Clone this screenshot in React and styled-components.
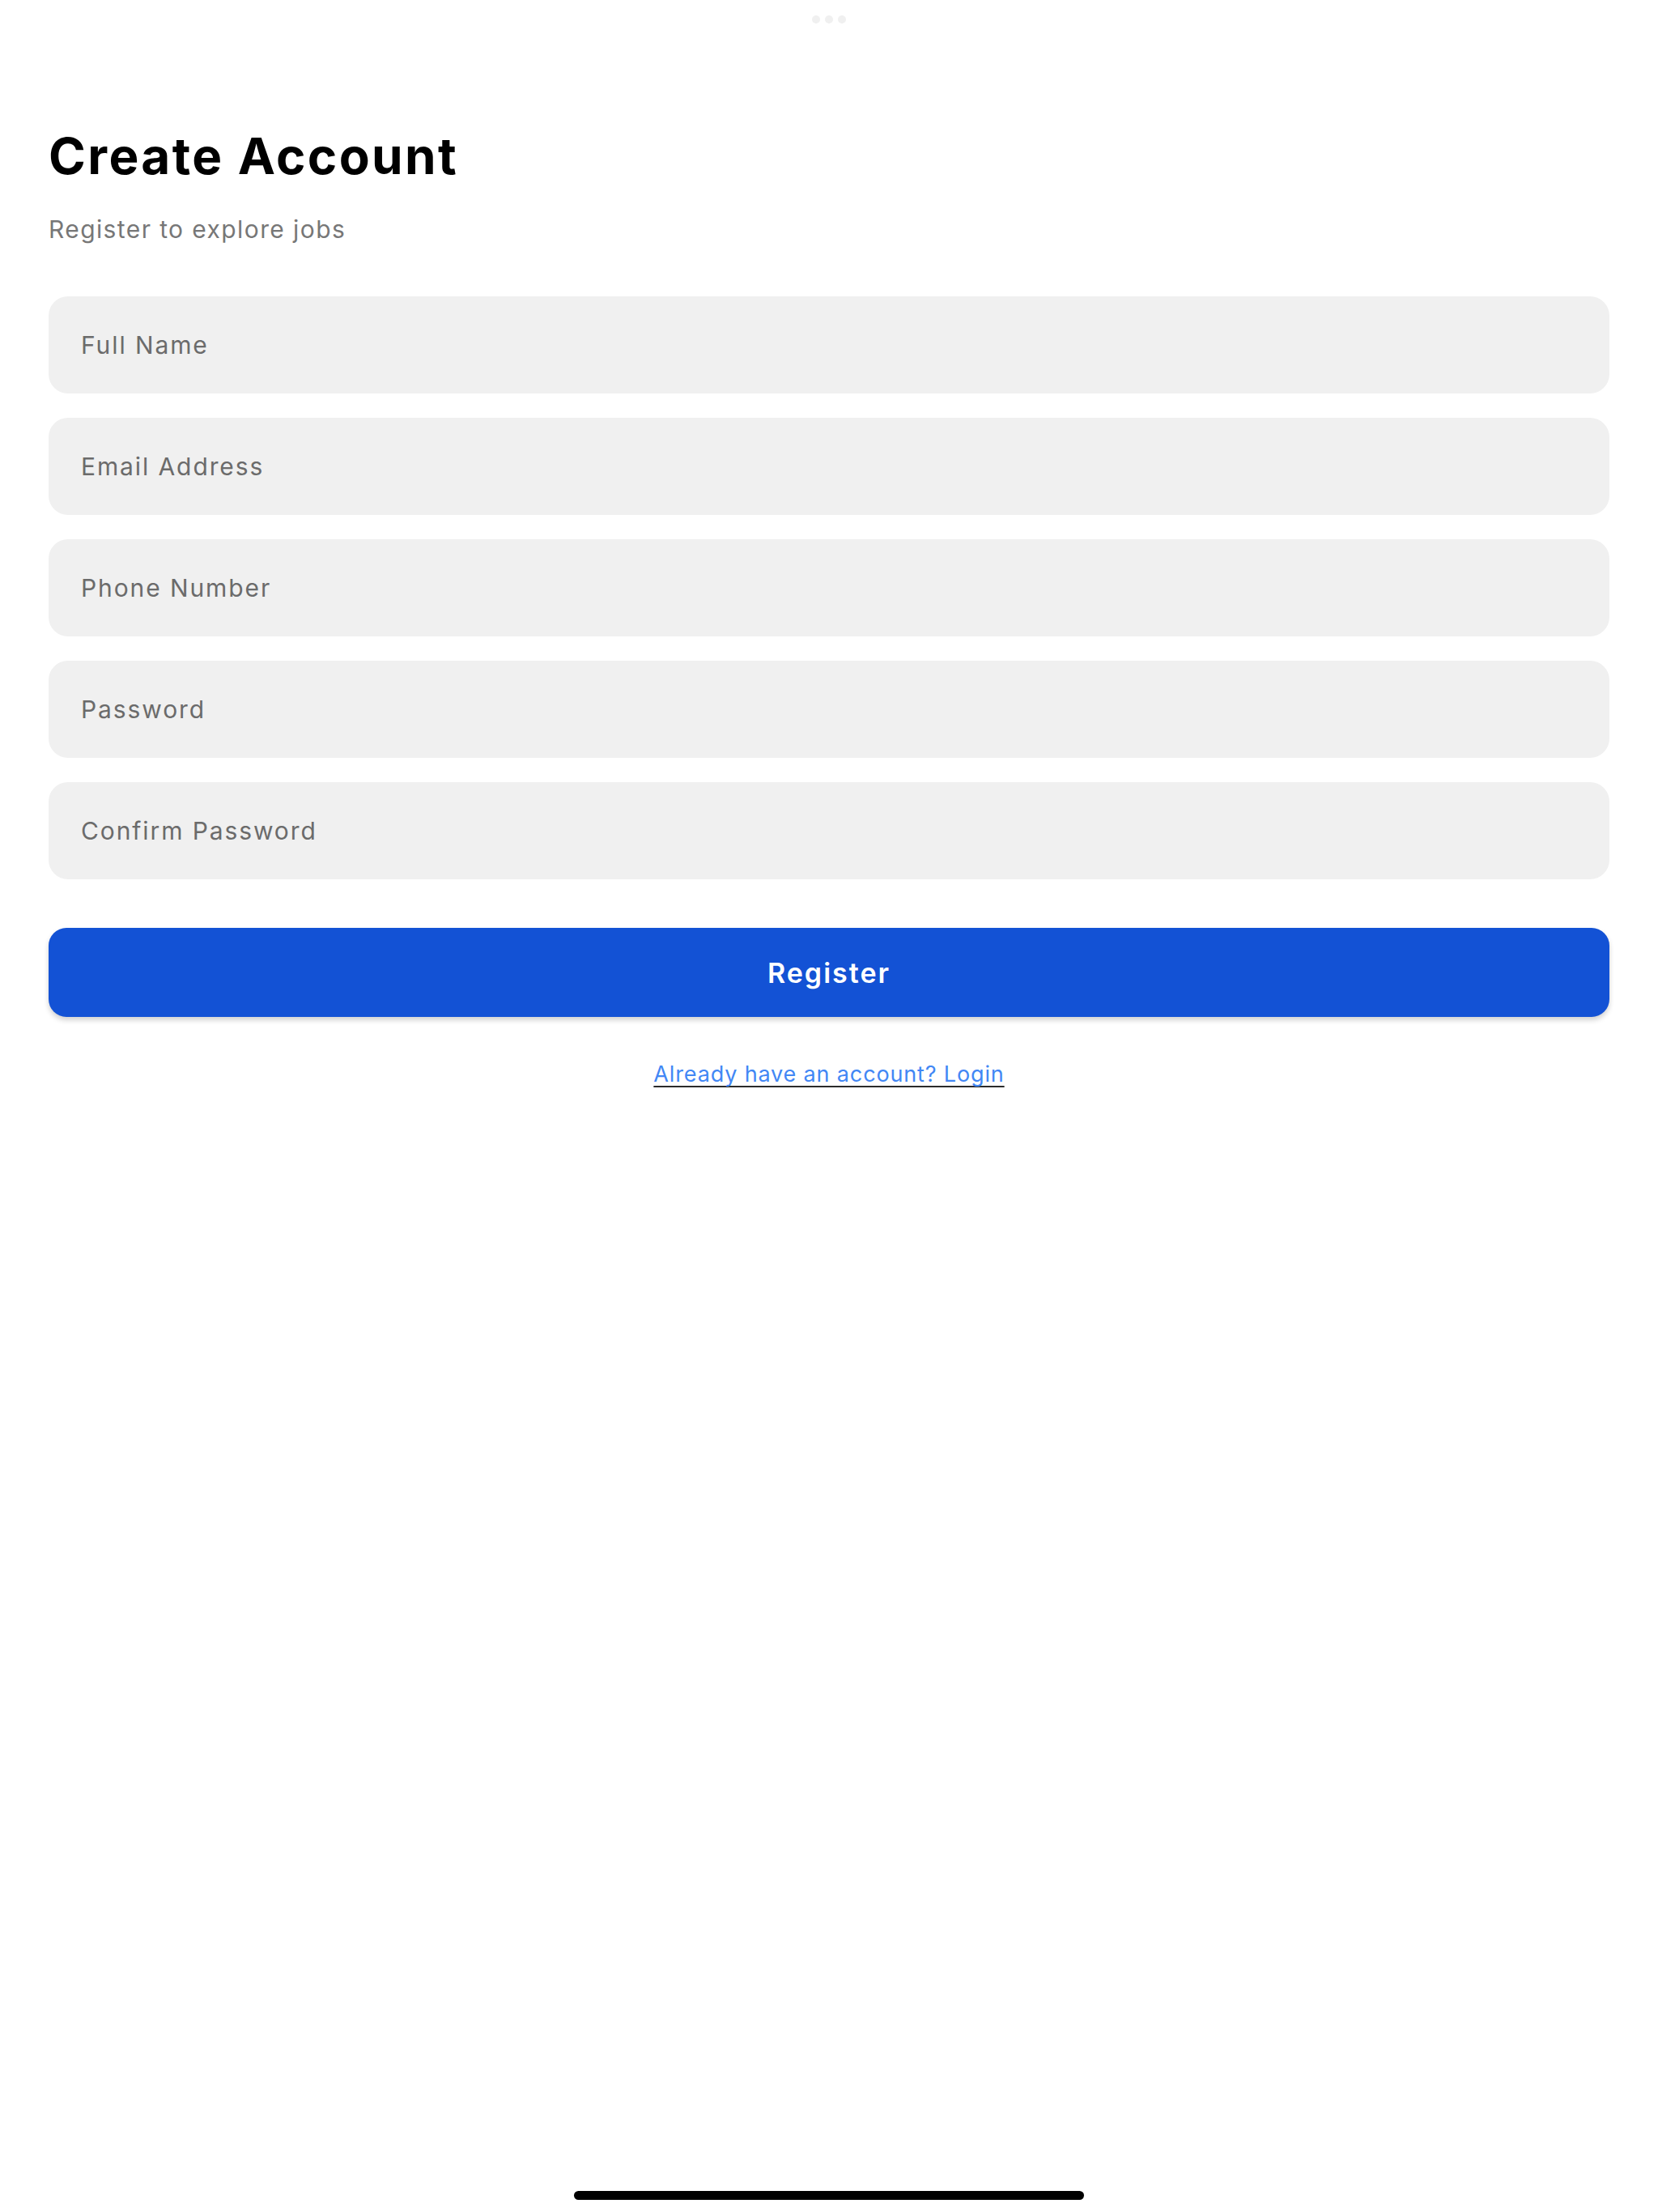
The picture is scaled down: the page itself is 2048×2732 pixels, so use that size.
import React from "react";
import styled, { createGlobalStyle } from "styled-components";

const GlobalStyle = createGlobalStyle`
  html, body {
    margin: 0;
    padding: 0;
    background: #ffffff;
  }
  body {
    font-family: Inter, "Noto Sans", "Liberation Sans", sans-serif;
  }
  * {
    box-sizing: border-box;
  }
`;

const fields = [
  { name: "fullName", placeholder: "Full Name", type: "text" },
  { name: "email", placeholder: "Email Address", type: "email" },
  { name: "phone", placeholder: "Phone Number", type: "tel" },
  { name: "password", placeholder: "Password", type: "password" },
  { name: "confirm", placeholder: "Confirm Password", type: "password" },
];

const App = () => {
  return (
    <>
      <GlobalStyle />
      <Screen>
        <DotsBar>
          <Dot />
          <Dot />
          <Dot />
        </DotsBar>
        <Content>
          <Title>Create Account</Title>
          <Subtitle>Register to explore jobs</Subtitle>
          <Form onSubmit={(e) => e.preventDefault()}>
            <Fields>
              {fields.map((f) => (
                <Field
                  key={f.name}
                  name={f.name}
                  type={f.type}
                  placeholder={f.placeholder}
                />
              ))}
            </Fields>
            <RegisterButton type="submit">Register</RegisterButton>
          </Form>
          <LoginLink href="#">Already have an account? Login</LoginLink>
        </Content>
        <HomeIndicator />
      </Screen>
    </>
  );
};

export default App;

const Screen = styled.div`
  width: 2048px;
  min-height: 2732px;
  display: flex;
  flex-direction: column;
  background: #ffffff;
`;

const DotsBar = styled.div`
  height: 48px;
  display: flex;
  justify-content: center;
  align-items: center;
  gap: 6px;
`;

const Dot = styled.span`
  width: 10px;
  height: 10px;
  border-radius: 50%;
  background: #f0f0f0;
`;

const Content = styled.main`
  padding: 0 60px;
  display: flex;
  flex-direction: column;
`;

const Title = styled.h1`
  margin: 108px 0 0;
  font-size: 62px;
  line-height: 1.2;
  font-weight: 700;
  color: #000000;
  letter-spacing: 2.4px;
`;

const Subtitle = styled.p`
  margin: 35px 0 0;
  font-size: 30px;
  line-height: 1.2;
  font-weight: 400;
  color: #777777;
  letter-spacing: 1.4px;
`;

const Form = styled.form`
  margin-top: 65px;
  display: flex;
  flex-direction: column;
  gap: 60px;
`;

const Fields = styled.div`
  display: flex;
  flex-direction: column;
  gap: 30px;
`;

const Field = styled.input`
  height: 120px;
  width: 100%;
  border: none;
  outline: none;
  border-radius: 24px;
  background: #f0f0f0;
  padding: 0 40px;
  font-family: inherit;
  font-size: 30px;
  color: #222222;
  letter-spacing: 1.9px;

  &::placeholder {
    color: #6b6b6b;
  }
`;

const RegisterButton = styled.button`
  height: 110px;
  width: 100%;
  border: none;
  border-radius: 22px;
  background: #1352d5;
  color: #ffffff;
  font-family: inherit;
  font-size: 34px;
  font-weight: 600;
  letter-spacing: 2px;
  box-shadow: 0 4px 6px rgba(0, 0, 0, 0.18);
  cursor: pointer;
`;

const LoginLink = styled.a`
  align-self: center;
  margin-top: 55px;
  font-size: 27px;
  line-height: 1.2;
  color: #4287f5;
  letter-spacing: 0.85px;
  text-decoration: underline;
  text-decoration-color: #2b2b2b;
  text-decoration-thickness: 2px;
  text-underline-offset: 5px;
`;

const HomeIndicator = styled.div`
  margin: auto auto 15px;
  width: 630px;
  height: 11px;
  border-radius: 6px;
  background: #000000;
`;
